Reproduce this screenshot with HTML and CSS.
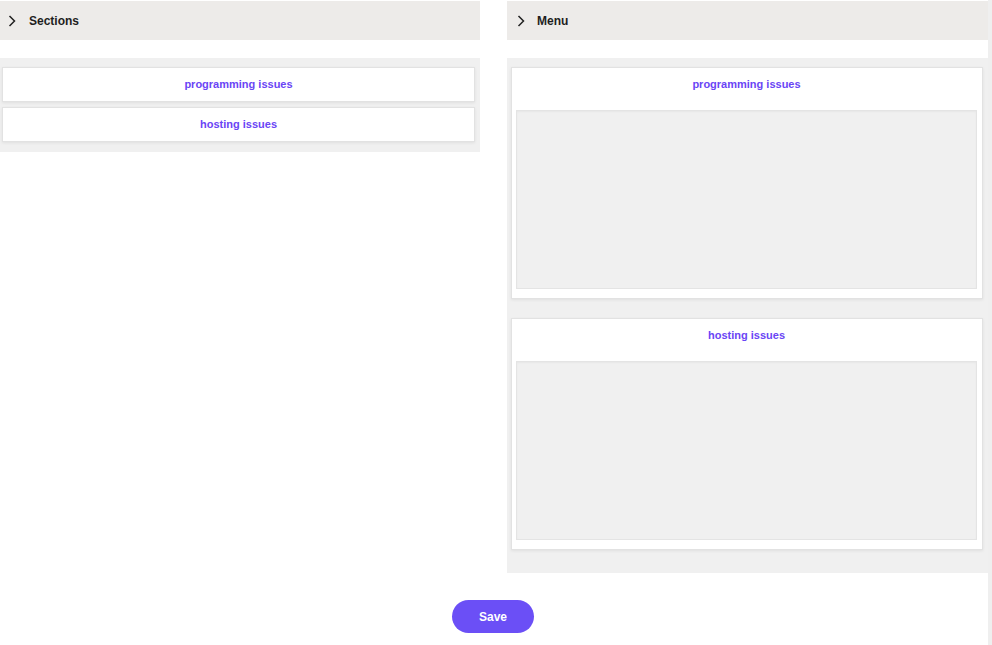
FILE: index.html
```html
<!DOCTYPE html>
<html lang="en">
<head>
  <meta charset="UTF-8">
  <title>Sections and Menu</title>
  <link rel="stylesheet" href="styles.css">
</head>
<body>
  <div class="page">
    <div class="columns">
      <div class="col col-left">
        <div class="head">
          <svg class="chev" width="8" height="12" viewBox="0 0 8 12"><path d="M1.5 1 L6.5 6 L1.5 11" fill="none" stroke="#222" stroke-width="1.5"/></svg>
          <span>Sections</span>
        </div>
        <div class="panel panel-left">
          <div class="item">programming issues</div>
          <div class="item">hosting issues</div>
        </div>
      </div>
      <div class="col col-right">
        <div class="head">
          <svg class="chev" width="8" height="12" viewBox="0 0 8 12"><path d="M1.5 1 L6.5 6 L1.5 11" fill="none" stroke="#222" stroke-width="1.5"/></svg>
          <span>Menu</span>
        </div>
        <div class="panel panel-right">
          <div class="menu-card">
            <div class="menu-title">programming issues</div>
            <div class="drop"></div>
          </div>
          <div class="menu-card">
            <div class="menu-title">hosting issues</div>
            <div class="drop"></div>
          </div>
        </div>
      </div>
    </div>
    <div class="actions">
      <button class="save-btn">Save</button>
    </div>
  </div>
</body>
</html>
```

FILE: styles.css
```css
body {
  margin: 0;
  font-family: 'Liberation Sans', Arial, sans-serif;
  background: #fff;
  color: #222;
}

.page {
  width: 988px;
  min-height: 645px;
  border-right: 4px solid #efefef;
}

.columns {
  display: flex;
  gap: 27px;
  align-items: flex-start;
}

.col-left {
  width: 480px;
}

.col-right {
  flex: 1;
}

.head {
  height: 39px;
  margin-top: 1px;
  background: #edebe9;
  display: flex;
  align-items: center;
  gap: 13px;
  padding-left: 8px;
  font-size: 12px;
  font-weight: bold;
  color: #1e1e1e;
}

.col-right .head {
  padding-left: 10px;
  gap: 12px;
}

.panel {
  margin-top: 18px;
  background: #f0f0f0;
  display: flex;
  flex-direction: column;
}

.panel-left {
  padding: 9px 5px 10px 2px;
  gap: 5px;
}

.item {
  height: 33px;
  line-height: 33px;
  background: #fff;
  border: 1px solid #e2e2e2;
  box-shadow: 0 1px 3px rgba(0,0,0,0.07);
  text-align: center;
  font-size: 11px;
  font-weight: bold;
  color: #6a45f5;
}

.panel-right {
  padding: 9px 5px 23px 4px;
  gap: 19px;
}

.menu-card {
  height: 230px;
  background: #fff;
  border: 1px solid #e2e2e2;
  box-shadow: 0 1px 3px rgba(0,0,0,0.07);
  padding: 0 5px 0 4px;
}

.menu-title {
  padding-top: 9px;
  height: 33px;
  line-height: 14px;
  text-align: center;
  font-size: 11px;
  font-weight: bold;
  color: #6a45f5;
}

.drop {
  height: 177px;
  background: #f0f0f0;
  border: 1px solid #e4e4e4;
  box-shadow: inset 0 1px 2px rgba(0,0,0,0.04);
}

.actions {
  display: flex;
  justify-content: center;
  padding-top: 27px;
  padding-right: 2px;
}

.save-btn {
  width: 82px;
  height: 33px;
  border: none;
  border-radius: 17px;
  background: #6b4ff6;
  color: #fff;
  font-family: 'Liberation Sans', Arial, sans-serif;
  font-size: 12px;
  font-weight: bold;
  cursor: pointer;
}
```
